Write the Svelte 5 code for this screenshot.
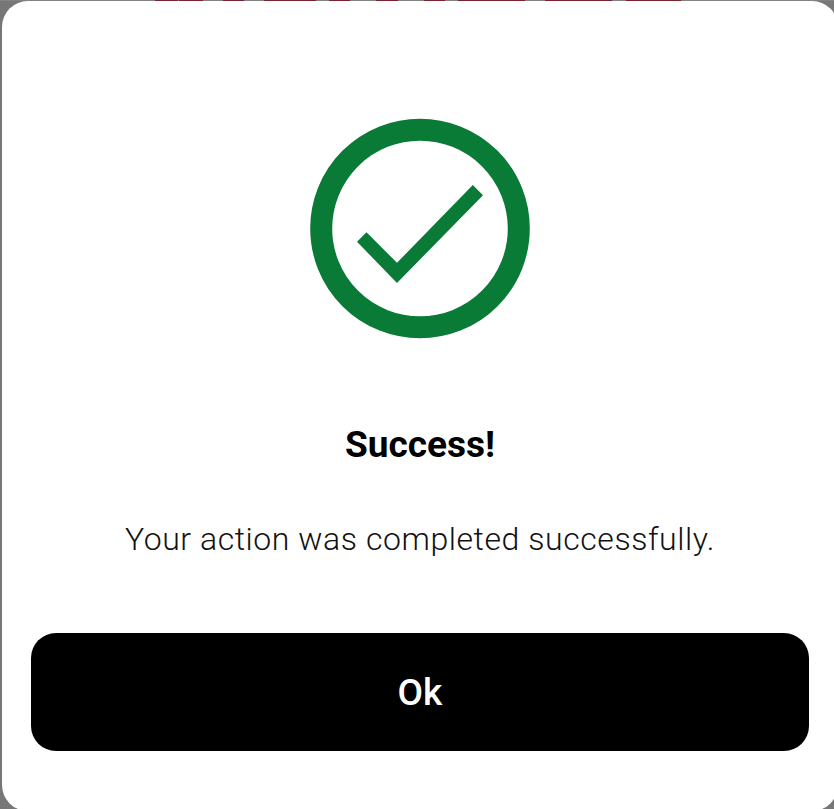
<script>
  // Visible slices of the banner lettering behind the dialog: [start, width]
  const slices = [[155, 23], [179, 24], [223, 21], [264, 52], [329, 21], [376, 22], [424, 21], [458, 67], [545, 67], [626, 55]];
</script>

<div class="page">
  <div class="backdrop" aria-hidden="true">
    {#each slices as [start, width]}
      <span style="left: {start}px; width: {width}px"></span>
    {/each}
  </div>
  <div class="dialog" role="dialog" aria-labelledby="title">
    <svg class="icon" viewBox="0 0 220 220" aria-hidden="true">
      <circle cx="110" cy="109.5" r="98.8" fill="none" stroke="#0a7b36" stroke-width="22" />
      <path d="M47 122.7 56.5 113.3 87 143.8 162.8 66 173 76.2 87 164Z" fill="#0a7b36" />
    </svg>
    <h1 id="title">Success!</h1>
    <p>Your action was completed successfully.</p>
    <button type="button">Ok</button>
  </div>
</div>

<style>
  :global(body) {
    margin: 0;
    overflow: hidden;
  }

  .page {
    position: relative;
    box-sizing: border-box;
    width: 834px;
    height: 809px;
    padding: 1px 0 0 2px;
    overflow: hidden;
    background: #777;
    font-family: Roboto, "Liberation Sans", sans-serif;
  }

  .backdrop {
    position: absolute;
    inset: 0 0 auto;
    height: 1px;
    background: #828282;
  }

  .backdrop span {
    position: absolute;
    top: 0;
    height: 1px;
    background: #78232e;
  }

  .dialog {
    position: relative;
    box-sizing: border-box;
    display: flex;
    flex-direction: column;
    align-items: center;
    width: 836px;
    height: 810px;
    padding: 118px 29px 0;
    border-radius: 26px;
    background: #fff;
  }

  .icon {
    flex: none;
    width: 220px;
    height: 220px;
    overflow: visible;
  }

  h1 {
    margin: 82px 0 0;
    font-size: 37px;
    font-weight: 700;
    line-height: 48px;
    color: #000;
  }

  p {
    margin: 46px 0 0;
    font-size: 32px;
    font-weight: 300;
    line-height: 48px;
    letter-spacing: 0.56px;
    white-space: nowrap;
    color: #111;
  }

  button {
    width: 778px;
    height: 118.5px;
    margin: 69.5px 0 0;
    padding: 3px 0 0;
    border: 0;
    border-radius: 25px;
    background: #000;
    color: #fff;
    font: 500 37px/48px Roboto, "Liberation Sans", sans-serif;
  }
</style>
